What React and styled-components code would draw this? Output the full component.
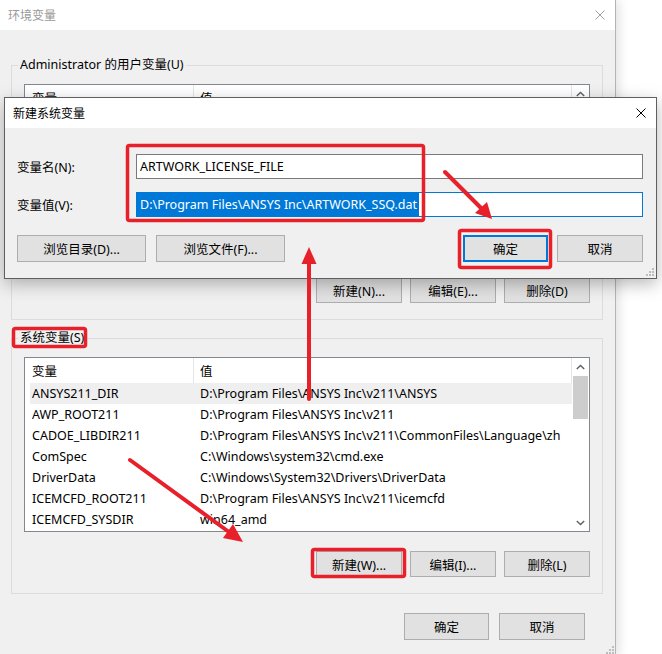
import React from "react";
import styled, { createGlobalStyle } from "styled-components";

const GlobalStyle = createGlobalStyle`
  html, body {
    margin: 0;
    padding: 0;
    background: #ffffff;
  }
  body {
    font-family: "Noto Sans", "Noto Sans CJK SC", sans-serif;
    font-size: 12.5px;
    color: #000;
  }
  * {
    box-sizing: border-box;
  }
`;

const Desktop = styled.div`
  position: relative;
  width: 662px;
  height: 654px;
  overflow: hidden;
  background: #ffffff;
`;

/* ---------- window chrome ---------- */

const MainWindow = styled.div`
  position: relative;
  width: 616px;
  height: 656px;
  display: flex;
  flex-direction: column;
  border-right: 1px solid #b4b4b4;
  box-shadow: 3px 0 10px rgba(0, 0, 0, 0.12);
`;

const TitleBar = styled.div`
  height: 30px;
  flex: none;
  display: flex;
  align-items: center;
  justify-content: space-between;
  padding: 0 10px 0 ${(p) => p.$inset}px;
  background: #ffffff;
  color: ${(p) => (p.$active ? "#000000" : "#999999")};
  font-size: 12px;
`;

const CloseGlyph = ({ color }) => (
  <svg width="10" height="10" viewBox="0 0 10 10">
    <path d="M0.5 0.5 L9.5 9.5 M9.5 0.5 L0.5 9.5" stroke={color} strokeWidth="1" />
  </svg>
);

const WindowBody = styled.div`
  flex: 1;
  display: flex;
  flex-direction: column;
  background: #f0f0f0;
  padding: 27px 12px 0 11px;
`;

const Grip = styled.svg`
  position: absolute;
  right: ${(p) => p.$r}px;
  bottom: ${(p) => p.$b}px;
`;

const ResizeGrip = ({ r, b }) => (
  <Grip $r={r} $b={b} width="8" height="8" viewBox="0 0 8 8">
    <g fill="#bdbdbd">
      <rect x="6" y="0" width="2" height="2" />
      <rect x="3" y="3" width="2" height="2" />
      <rect x="6" y="3" width="2" height="2" />
      <rect x="0" y="6" width="2" height="2" />
      <rect x="3" y="6" width="2" height="2" />
      <rect x="6" y="6" width="2" height="2" />
    </g>
  </Grip>
);

/* ---------- group boxes ---------- */

const Group = styled.fieldset`
  margin: ${(p) => p.$top || 0}px 0 0 0;
  min-width: 0;
  border: 1px solid #dcdcdc;
  padding: 11px 12px 16px 12px;
  display: flex;
  flex-direction: column;
`;

const GroupLabel = styled.legend`
  padding: 0 2px;
  margin-left: -6px;
  line-height: 16px;
  font-size: 12.5px;
`;

/* ---------- list view ---------- */

const ListBox = styled.div`
  height: ${(p) => p.$h}px;
  border: 1px solid #828790;
  background: #ffffff;
  display: grid;
  grid-template-columns: 1fr 17px;
  overflow: hidden;
`;

const ListContent = styled.div`
  display: flex;
  flex-direction: column;
  overflow: hidden;
`;

const HeaderRow = styled.div`
  height: 25px;
  flex: none;
  display: grid;
  grid-template-columns: 169px 1fr;
`;

const HeaderCell = styled.div`
  display: flex;
  align-items: center;
  padding-left: ${(p) => p.$pad}px;
  border-right: 1px solid #e5e5e5;
`;

const Row = styled.div`
  height: 21px;
  flex: none;
  margin-left: 5px;
  display: grid;
  grid-template-columns: 163px 1fr;
  align-items: center;
  background: ${(p) => (p.$selected ? "#efefef" : "transparent")};
  white-space: nowrap;
`;

const Cell = styled.div`
  padding-left: ${(p) => p.$pad}px;
  overflow: hidden;
`;

const ScrollBar = styled.div`
  display: flex;
  flex-direction: column;
  background: #ffffff;
`;

const ScrollArrow = styled.div`
  height: 17px;
  flex: none;
  display: flex;
  align-items: center;
  justify-content: center;
`;

const ScrollThumb = styled.div`
  height: 43px;
  margin: 1px 1px 0 1px;
  background: #cdcdcd;
`;

const ScrollTrack = styled.div`
  flex: 1;
`;

const Chevron = ({ down }) => (
  <svg width="9" height="6" viewBox="0 0 9 6">
    <path
      d={down ? "M0.8 1 L4.5 4.6 L8.2 1" : "M0.8 5 L4.5 1.4 L8.2 5"}
      fill="none"
      stroke="#606060"
      strokeWidth="1.4"
    />
  </svg>
);

const VarList = ({ height, rows, selected }) => (
  <ListBox $h={height}>
    <ListContent>
      <HeaderRow>
        <HeaderCell $pad={7}>变量</HeaderCell>
        <HeaderCell $pad={6}>值</HeaderCell>
      </HeaderRow>
      {rows.map(([name, value], i) => (
        <Row key={name} $selected={i === selected}>
          <Cell $pad={2}>{name}</Cell>
          <Cell $pad={7}>{value}</Cell>
        </Row>
      ))}
    </ListContent>
    <ScrollBar>
      <ScrollArrow>
        <Chevron />
      </ScrollArrow>
      <ScrollThumb />
      <ScrollTrack />
      <ScrollArrow>
        <Chevron down />
      </ScrollArrow>
    </ScrollBar>
  </ListBox>
);

/* ---------- buttons ---------- */

const ButtonRow = styled.div`
  display: flex;
  justify-content: ${(p) => p.$justify || "flex-end"};
  gap: ${(p) => p.$gap || 8}px;
  margin-top: ${(p) => p.$top}px;
  padding-right: ${(p) => p.$right || 0}px;
`;

const ButtonGroup = styled.div`
  display: flex;
  gap: ${(p) => p.$gap}px;
`;

const Button = styled.button`
  width: ${(p) => p.$w}px;
  height: ${(p) => p.$h || 26}px;
  padding: 0;
  margin: 0;
  font: inherit;
  color: #000;
  background: #e1e1e1;
  border: ${(p) => (p.$primary ? "2px solid #0078d7" : "1px solid #adadad")};
  display: flex;
  align-items: center;
  justify-content: center;
  white-space: nowrap;
`;

/* ---------- new variable dialog ---------- */

const Dialog = styled.div`
  position: absolute;
  left: 4px;
  top: 97px;
  width: 653px;
  height: 182px;
  display: flex;
  flex-direction: column;
  border: 1px solid #5f5f5f;
  box-shadow: 0 5px 16px rgba(0, 0, 0, 0.28);
  background: #f0f0f0;
`;

const DialogBody = styled.div`
  position: relative;
  flex: 1;
  padding: 26px 13px 0 12px;
  background: #f0f0f0;
`;

const FieldGrid = styled.div`
  display: grid;
  grid-template-columns: 119px 1fr;
  row-gap: 13px;
  align-items: center;
`;

const FieldLabel = styled.div`
  white-space: nowrap;
`;

const TextBox = styled.div`
  height: 25px;
  display: flex;
  align-items: center;
  padding: ${(p) => (p.$focused ? "0" : "0 3px")};
  background: #ffffff;
  border: 1px solid ${(p) => (p.$focused ? "#0078d7" : "#7a7a7a")};
  white-space: nowrap;
  overflow: hidden;
`;

const Selection = styled.span`
  height: 100%;
  display: flex;
  align-items: center;
  padding: 0 2px 0 3px;
  background: #0078d7;
  color: #ffffff;
`;

/* ---------- annotation layer ---------- */

const Overlay = styled.svg`
  position: absolute;
  left: 0;
  top: 0;
  pointer-events: none;
`;

const Annotations = () => (
  <Overlay width="662" height="654" viewBox="0 0 662 654">
    <g fill="none" stroke="#e8202a" strokeWidth="3.5" strokeLinejoin="round">
      <rect x="127.5" y="145.5" width="296" height="75" rx="2" />
      <rect x="459.5" y="230.5" width="91" height="37" rx="2" />
      <rect x="13.5" y="328.5" width="72" height="18" rx="2" />
      <rect x="312.5" y="549.5" width="92" height="27" rx="2" />
    </g>
    <g stroke="#e8202a" strokeWidth="4" strokeLinecap="round">
      <line x1="445" y1="172" x2="482" y2="209" />
      <line x1="309" y1="399" x2="309" y2="260" />
      <line x1="130" y1="460" x2="229" y2="532" />
    </g>
    <g fill="#e8202a">
      <polygon points="492,219 475,213 487,202" />
      <polygon points="309,247 301.5,264 316.5,264" />
      <polygon points="243,542 223,538 233,524" />
    </g>
  </Overlay>
);

/* ---------- data ---------- */

const systemVars = [
  ["ANSYS211_DIR", "D:\\Program Files\\ANSYS Inc\\v211\\ANSYS"],
  ["AWP_ROOT211", "D:\\Program Files\\ANSYS Inc\\v211"],
  ["CADOE_LIBDIR211", "D:\\Program Files\\ANSYS Inc\\v211\\CommonFiles\\Language\\zh"],
  ["ComSpec", "C:\\Windows\\system32\\cmd.exe"],
  ["DriverData", "C:\\Windows\\System32\\Drivers\\DriverData"],
  ["ICEMCFD_ROOT211", "D:\\Program Files\\ANSYS Inc\\v211\\icemcfd"],
  ["ICEMCFD_SYSDIR", "win64_amd"],
];

export default function App() {
  return (
    <>
      <GlobalStyle />
      <Desktop>
        <MainWindow>
          <TitleBar $inset={8}>
            <span>环境变量</span>
            <CloseGlyph color="#a0a0a0" />
          </TitleBar>
          <WindowBody>
            <Group>
              <GroupLabel>Administrator 的用户变量(U)</GroupLabel>
              <VarList height={174} rows={[]} selected={-1} />
              <ButtonRow $top={19} $gap={8}>
                <Button $w={86}>新建(N)...</Button>
                <Button $w={86}>编辑(E)...</Button>
                <Button $w={86}>删除(D)</Button>
              </ButtonRow>
            </Group>
            <Group $top={10}>
              <GroupLabel>系统变量(S)</GroupLabel>
              <VarList height={175} rows={systemVars} selected={0} />
              <ButtonRow $top={19} $gap={8}>
                <Button $w={86}>新建(W)...</Button>
                <Button $w={86}>编辑(I)...</Button>
                <Button $w={86}>删除(L)</Button>
              </ButtonRow>
            </Group>
            <ButtonRow $top={19} $gap={10} $right={18}>
              <Button $w={85} $h={27}>确定</Button>
              <Button $w={86} $h={27}>取消</Button>
            </ButtonRow>
          </WindowBody>
          <ResizeGrip r={1} b={2} />
        </MainWindow>

        <Dialog>
          <TitleBar $inset={8} $active>
            <span>新建系统变量</span>
            <CloseGlyph color="#000000" />
          </TitleBar>
          <DialogBody>
            <FieldGrid>
              <FieldLabel>变量名(N):</FieldLabel>
              <TextBox>ARTWORK_LICENSE_FILE</TextBox>
              <FieldLabel>变量值(V):</FieldLabel>
              <TextBox $focused>
                <Selection>D:\Program Files\ANSYS Inc\ARTWORK_SSQ.dat</Selection>
              </TextBox>
            </FieldGrid>
            <ButtonRow $top={18} $justify="space-between">
              <ButtonGroup $gap={10}>
                <Button $w={129} $h={27}>浏览目录(D)...</Button>
                <Button $w={129} $h={27}>浏览文件(F)...</Button>
              </ButtonGroup>
              <ButtonGroup $gap={9}>
                <Button $w={85} $h={27} $primary>确定</Button>
                <Button $w={86} $h={27}>取消</Button>
              </ButtonGroup>
            </ButtonRow>
            <ResizeGrip r={2} b={2} />
          </DialogBody>
        </Dialog>

        <Annotations />
      </Desktop>
    </>
  );
}
